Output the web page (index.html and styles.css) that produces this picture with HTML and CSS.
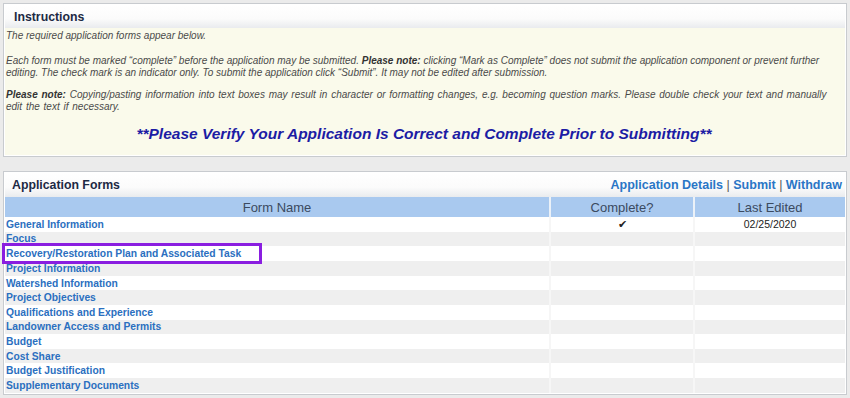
FILE: index.html
```html
<!DOCTYPE html>
<html>
<head>
<meta charset="utf-8">
<link rel="stylesheet" href="styles.css">
</head>
<body>
<div class="page">
  <section class="panel instructions">
    <div class="panel-head"><h2>Instructions</h2></div>
    <div class="panel-body">
      <p class="first">The required application forms appear below.</p>
      <p>Each form must be marked “complete” before the application may be submitted. <b>Please note:</b> clicking “Mark as Complete” does not submit the application component or prevent further editing. The check mark is an indicator only. To submit the application click “Submit”. It may not be edited after submission.</p>
      <p class="third"><b>Please note:</b> Copying/pasting information into text boxes may result in character or formatting changes, e.g. becoming question marks. Please double check your text and manually edit the text if necessary.</p>
      <div class="verify">**Please Verify Your Application Is Correct and Complete Prior to Submitting**</div>
    </div>
  </section>

  <section class="panel forms">
    <div class="panel-head forms-head">
      <h2>Application Forms</h2>
      <div class="actions"><a href="#">Application Details</a> <span class="sep">|</span> <a href="#">Submit</a> <span class="sep">|</span> <a href="#">Withdraw</a></div>
    </div>
    <table class="grid">
      <thead>
        <tr><th class="c-name">Form Name</th><th class="c-comp">Complete?</th><th class="c-date">Last Edited</th></tr>
      </thead>
      <tbody>
        <tr><td><a href="#">General Information</a></td><td class="center">✔</td><td class="center">02/25/2020</td></tr>
        <tr><td><a href="#">Focus</a></td><td></td><td></td></tr>
        <tr><td><a href="#" class="highlight">Recovery/Restoration Plan and Associated Task</a></td><td></td><td></td></tr>
        <tr><td><a href="#">Project Information</a></td><td></td><td></td></tr>
        <tr><td><a href="#">Watershed Information</a></td><td></td><td></td></tr>
        <tr><td><a href="#">Project Objectives</a></td><td></td><td></td></tr>
        <tr><td><a href="#">Qualifications and Experience</a></td><td></td><td></td></tr>
        <tr><td><a href="#">Landowner Access and Permits</a></td><td></td><td></td></tr>
        <tr><td><a href="#">Budget</a></td><td></td><td></td></tr>
        <tr><td><a href="#">Cost Share</a></td><td></td><td></td></tr>
        <tr><td><a href="#">Budget Justification</a></td><td></td><td></td></tr>
        <tr><td><a href="#">Supplementary Documents</a></td><td></td><td></td></tr>
      </tbody>
    </table>
  </section>
</div>
</body>
</html>
```

FILE: styles.css
```css
html, body {
  margin: 0;
  padding: 0;
  background: #ebebeb;
  font-family: "Liberation Sans", Arial, sans-serif;
}
.page {
  padding: 3px 3px 0 3px;
  display: flex;
  flex-direction: column;
  gap: 14px;
}
.panel {
  border: 1px solid #c8cbcf;
  background: #fff;
  padding: 1px;
}
.panel-head {
  height: 23px;
  background: linear-gradient(#ffffff 0%, #fbfbfb 60%, #e9ebee 100%);
  display: flex;
  align-items: center;
  padding: 0 3px 0 9px;
}
.panel-head h2 {
  margin: 0;
  font-size: 12.3px;
  font-weight: bold;
  color: #1d2a44;
}
.instructions .panel-body {
  background: #fafaeb;
  padding: 2px 3px 12px 1px;
  font-size: 10px;
  font-style: italic;
  color: #4a4a4a;
  line-height: 12px;
}
.instructions .panel-body p {
  margin: 0 0 10px 0;
}
.instructions .panel-body p.first {
  margin-bottom: 13px;
}
.instructions .panel-body p.third {
  word-spacing: 1px;
}
.instructions .panel-body b {
  color: #333;
}
.verify {
  text-align: center;
  font-size: 15.5px;
  font-weight: bold;
  font-style: italic;
  color: #1c1ca4;
  margin-top: 12px;
  line-height: 18px;
}
.forms-head {
  justify-content: space-between;
  padding-left: 7px;
  height: 24px;
}
.actions {
  font-size: 12.5px;
  font-weight: bold;
}
.actions a {
  color: #2a76c6;
  text-decoration: none;
}
.actions .sep {
  color: #555;
  font-weight: normal;
}
.grid {
  width: 100%;
  border-collapse: collapse;
  margin-top: 0;
  font-size: 10.3px;
}
.grid th {
  background: #a9c9ef;
  font-weight: normal;
  font-size: 13px;
  color: #3b4a60;
  height: 20px;
  padding: 0;
  border-left: 2px solid #ebf1f8;
}
.grid th:first-child { border-left: none; }
.c-name { width: 544px; }
.c-comp { width: 142px; }
.grid td {
  height: 14.6px;
  padding: 0 1px;
  line-height: 13px;
  border-left: 2px solid #f6f6f6;
  color: #222;
}
.grid td:first-child { border-left: none; }
.grid tbody tr:nth-child(even) td {
  background: #efefef;
}
.grid td.center {
  text-align: center;
  font-size: 10.5px;
}
.grid td a {
  color: #2b6fc0;
  font-weight: bold;
  text-decoration: none;
}
.grid td a.highlight {
  display: inline-block;
  outline: 3px solid #8a1ee0;
  outline-offset: 0;
  padding: 1px 18px 1px 1px;
  margin-left: -1px;
}
```
